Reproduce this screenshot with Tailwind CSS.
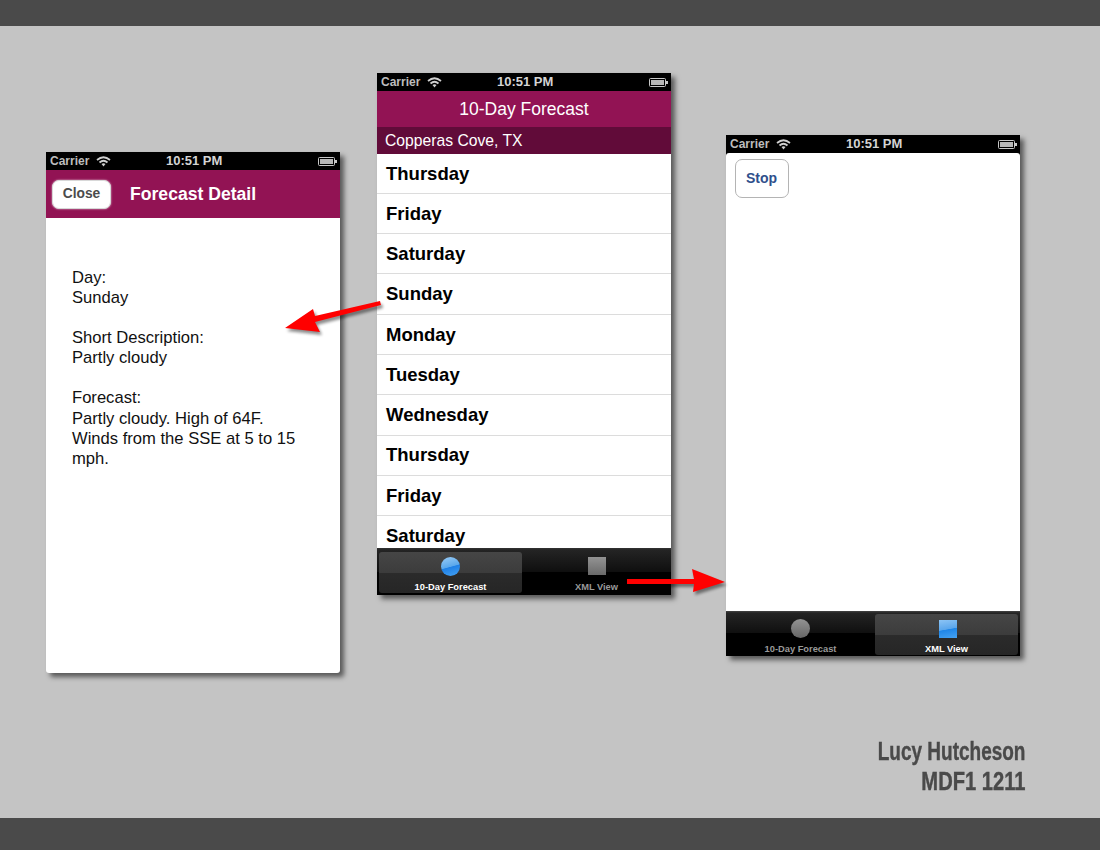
<!DOCTYPE html>
<html lang="en">
<head>
    <meta charset="UTF-8">
    <title>MDF1 1211</title>
    <script src="https://cdn.jsdelivr.net/npm/@tailwindcss/browser@4"></script>
</head>
<body class="w-[1100px] h-[850px] overflow-hidden bg-[#c4c4c4] font-['Liberation_Sans',Arial,sans-serif]">
<div class="relative w-[1100px] h-[850px] flex flex-col justify-between">
    <div class="h-[26px] bg-[#4a4a4a]"></div>
    <div class="h-[32px] bg-[#4a4a4a]"></div>

    <!-- Detail screen -->
    <div class="absolute left-[46px] top-[152px] w-[294px] h-[521px] flex flex-col bg-white rounded-b-[3px] shadow-[4px_4px_5px_rgba(0,0,0,0.55)]">
        <div class="h-[18px] bg-black flex items-center justify-between pl-[4px] pr-[3px] text-[12px] font-bold text-[#bdbdbd] relative">
            <div class="flex items-center gap-[7px]">
                <span>Carrier</span>
                <svg width="15" height="11" viewBox="0 0 15 11"><path d="M1 4 Q7.5 -1.5 14 4 M3.5 6.5 Q7.5 3 11.5 6.5" fill="none" stroke="#d0d0d0" stroke-width="1.7"/><path d="M5.5 8 Q7.5 6.5 9.5 8 L7.5 10.5Z" fill="#d0d0d0"/></svg>
            </div>
            <span class="absolute left-[120px] text-[13px] text-[#d4d4d4]">10:51 PM</span>
            <svg width="19" height="9" viewBox="0 0 19 9"><rect x="0.5" y="0.5" width="16" height="8" rx="1" fill="none" stroke="#c8c8c8"/><rect x="2" y="2" width="13" height="5" fill="#b8b8b8"/><rect x="17" y="3" width="2" height="3" fill="#c8c8c8"/></svg>
        </div>
        <div class="h-[48px] bg-[#921354] flex items-center pl-[6px]">
            <div class="w-[59px] h-[29px] rounded-[7px] bg-white border border-[#d8d8d8] shadow-[0_0_2px_rgba(255,255,255,0.8)] flex items-center justify-center pt-[1px] text-[13.8px] font-bold text-[#4c4c4c]">Close</div>
            <div class="ml-[19px] text-[17.6px] font-bold text-white">Forecast Detail</div>
        </div>
        <div class="pt-[49.6px] pl-[26px] pr-[40px] text-[16.6px] leading-[20.2px] text-[#111]">
            <p>Day:<br>Sunday</p>
            <p class="mt-[20px]">Short Description:<br>Partly cloudy</p>
            <p class="mt-[20px]">Forecast:<br>Partly cloudy. High of 64F. Winds from the SSE at 5 to 15 mph.</p>
        </div>
    </div>

    <!-- List screen -->
    <div class="absolute left-[377px] top-[73px] w-[294px] h-[522px] flex flex-col bg-white shadow-[4px_4px_5px_rgba(0,0,0,0.55)]">
        <div class="h-[18px] shrink-0 bg-black flex items-center justify-between pl-[4px] pr-[3px] text-[12px] font-bold text-[#bdbdbd] relative">
            <div class="flex items-center gap-[7px]">
                <span>Carrier</span>
                <svg width="15" height="11" viewBox="0 0 15 11"><path d="M1 4 Q7.5 -1.5 14 4 M3.5 6.5 Q7.5 3 11.5 6.5" fill="none" stroke="#d0d0d0" stroke-width="1.7"/><path d="M5.5 8 Q7.5 6.5 9.5 8 L7.5 10.5Z" fill="#d0d0d0"/></svg>
            </div>
            <span class="absolute left-[120px] text-[13px] text-[#d4d4d4]">10:51 PM</span>
            <svg width="19" height="9" viewBox="0 0 19 9"><rect x="0.5" y="0.5" width="16" height="8" rx="1" fill="none" stroke="#c8c8c8"/><rect x="2" y="2" width="13" height="5" fill="#b8b8b8"/><rect x="17" y="3" width="2" height="3" fill="#c8c8c8"/></svg>
        </div>
        <div class="h-[36px] shrink-0 bg-[#921354] flex items-center justify-center text-[17.5px] text-white">10-Day Forecast</div>
        <div class="h-[27px] shrink-0 bg-[#610b39] flex items-center pl-[8px] text-[15.7px] text-white">Copperas Cove, TX</div>
        <div class="flex-1 overflow-hidden text-[18.5px] font-bold text-black">
            <div class="h-[39.9px] pl-[9px] flex items-center border-b border-[#dcdcdc]">Thursday</div>
            <div class="h-[40.3px] pl-[9px] flex items-center border-b border-[#dcdcdc]">Friday</div>
            <div class="h-[40.3px] pl-[9px] flex items-center border-b border-[#dcdcdc]">Saturday</div>
            <div class="h-[40.3px] pl-[9px] flex items-center border-b border-[#dcdcdc]">Sunday</div>
            <div class="h-[40.3px] pl-[9px] flex items-center border-b border-[#dcdcdc]">Monday</div>
            <div class="h-[40.3px] pl-[9px] flex items-center border-b border-[#dcdcdc]">Tuesday</div>
            <div class="h-[40.3px] pl-[9px] flex items-center border-b border-[#dcdcdc]">Wednesday</div>
            <div class="h-[40.3px] pl-[9px] flex items-center border-b border-[#dcdcdc]">Thursday</div>
            <div class="h-[40.3px] pl-[9px] flex items-center border-b border-[#dcdcdc]">Friday</div>
            <div class="h-[40.3px] pl-[9px] flex items-center border-b border-[#dcdcdc]">Saturday</div>
        </div>
        <div class="h-[47px] shrink-0 flex pl-[2px] pt-[4px] pb-[2px] bg-[linear-gradient(#333_0,#242424_2px,#0f0f0f_50%,#000_50%)] text-[9.3px] font-bold">
            <div class="w-[143px] rounded-[3px] flex flex-col items-center bg-[linear-gradient(#464646_0,#3c3c3c_50%,#2b2b2b_50%,#262626_100%)] text-white">
                <div class="mt-[5px] shrink-0 w-[19px] h-[19px] rounded-full bg-[linear-gradient(165deg,#9accf6_0,#5aa8ec_50%,#1f80e6_53%,#45a2f2_100%)]"></div>
                <span class="mt-[5px]">10-Day Forecast</span>
            </div>
            <div class="flex-1 flex flex-col items-center text-[#999]">
                <div class="mt-[5px] shrink-0 w-[18px] h-[18px] bg-[linear-gradient(#939393,#6a6a6a)]"></div>
                <span class="mt-[6px]">XML View</span>
            </div>
        </div>
    </div>

    <!-- Web view screen -->
    <div class="absolute left-[726px] top-[135px] w-[294px] h-[521px] flex flex-col bg-black shadow-[4px_4px_5px_rgba(0,0,0,0.55)]">
        <div class="h-[18px] shrink-0 bg-black flex items-center justify-between pl-[4px] pr-[3px] text-[12px] font-bold text-[#bdbdbd] relative">
            <div class="flex items-center gap-[7px]">
                <span>Carrier</span>
                <svg width="15" height="11" viewBox="0 0 15 11"><path d="M1 4 Q7.5 -1.5 14 4 M3.5 6.5 Q7.5 3 11.5 6.5" fill="none" stroke="#d0d0d0" stroke-width="1.7"/><path d="M5.5 8 Q7.5 6.5 9.5 8 L7.5 10.5Z" fill="#d0d0d0"/></svg>
            </div>
            <span class="absolute left-[120px] text-[13px] text-[#d4d4d4]">10:51 PM</span>
            <svg width="19" height="9" viewBox="0 0 19 9"><rect x="0.5" y="0.5" width="16" height="8" rx="1" fill="none" stroke="#c8c8c8"/><rect x="2" y="2" width="13" height="5" fill="#b8b8b8"/><rect x="17" y="3" width="2" height="3" fill="#c8c8c8"/></svg>
        </div>
        <div class="flex-1 bg-white rounded-t-[3px] pl-[9px] pt-[6px]">
            <div class="w-[54px] h-[39px] rounded-[7px] border border-[#b4b4b4] flex items-center justify-center pr-[1px] text-[14px] font-bold text-[#2f4f8c]">Stop</div>
        </div>
        <div class="h-[45px] shrink-0 flex pr-[2px] pt-[3px] pb-[1px] bg-[linear-gradient(#444_0,#242424_2px,#0f0f0f_50%,#000_50%)] text-[9.3px] font-bold">
            <div class="w-[149px] flex flex-col items-center text-[#999]">
                <div class="mt-[5px] shrink-0 w-[19px] h-[19px] rounded-full bg-[linear-gradient(#939393,#666)]"></div>
                <span class="mt-[5px]">10-Day Forecast</span>
            </div>
            <div class="flex-1 rounded-[3px] flex flex-col items-center bg-[linear-gradient(#464646_0,#3c3c3c_50%,#2b2b2b_50%,#262626_100%)] text-white">
                <div class="mt-[6px] ml-[2px] shrink-0 w-[18px] h-[18px] bg-[linear-gradient(170deg,#8cc4f5_0,#5aa6ec_50%,#1f86e8_53%,#45a2f2_100%)]"></div>
                <span class="mt-[5px]">XML View</span>
            </div>
        </div>
    </div>

    <!-- Arrows -->
    <svg class="absolute left-0 top-0" width="1100" height="850" viewBox="0 0 1100 850">
        <g fill="#000" opacity="0.45" class="blur-[1.5px]" transform="translate(2 3)">
            <path d="M381 305 L315 322 L320 332 L285 328 L313 309 L315 316 L380 301Z"/>
            <path d="M627 579 L694 579 L692 569 L725 582 L693 592 L694 584 L627 584Z"/>
        </g>
        <path fill="#ff0000" d="M381 305 L315 322 L320 332 L285 328 L313 309 L315 316 L380 301Z"/>
        <path fill="#ff0000" d="M627 579 L694 579 L692 569 L725 582 L693 592 L694 584 L627 584Z"/>
    </svg>

    <!-- Credit -->
    <div class="absolute right-[75px] top-[736px] origin-right scale-x-[0.76] text-right text-[25px] leading-[30px] font-bold text-[#4a4a4a] [-webkit-text-stroke:0.4px_#4a4a4a]">
        <div>Lucy Hutcheson</div>
        <div class="origin-right scale-x-[1.06]">MDF1 1211</div>
    </div>
</div>
</body>
</html>
